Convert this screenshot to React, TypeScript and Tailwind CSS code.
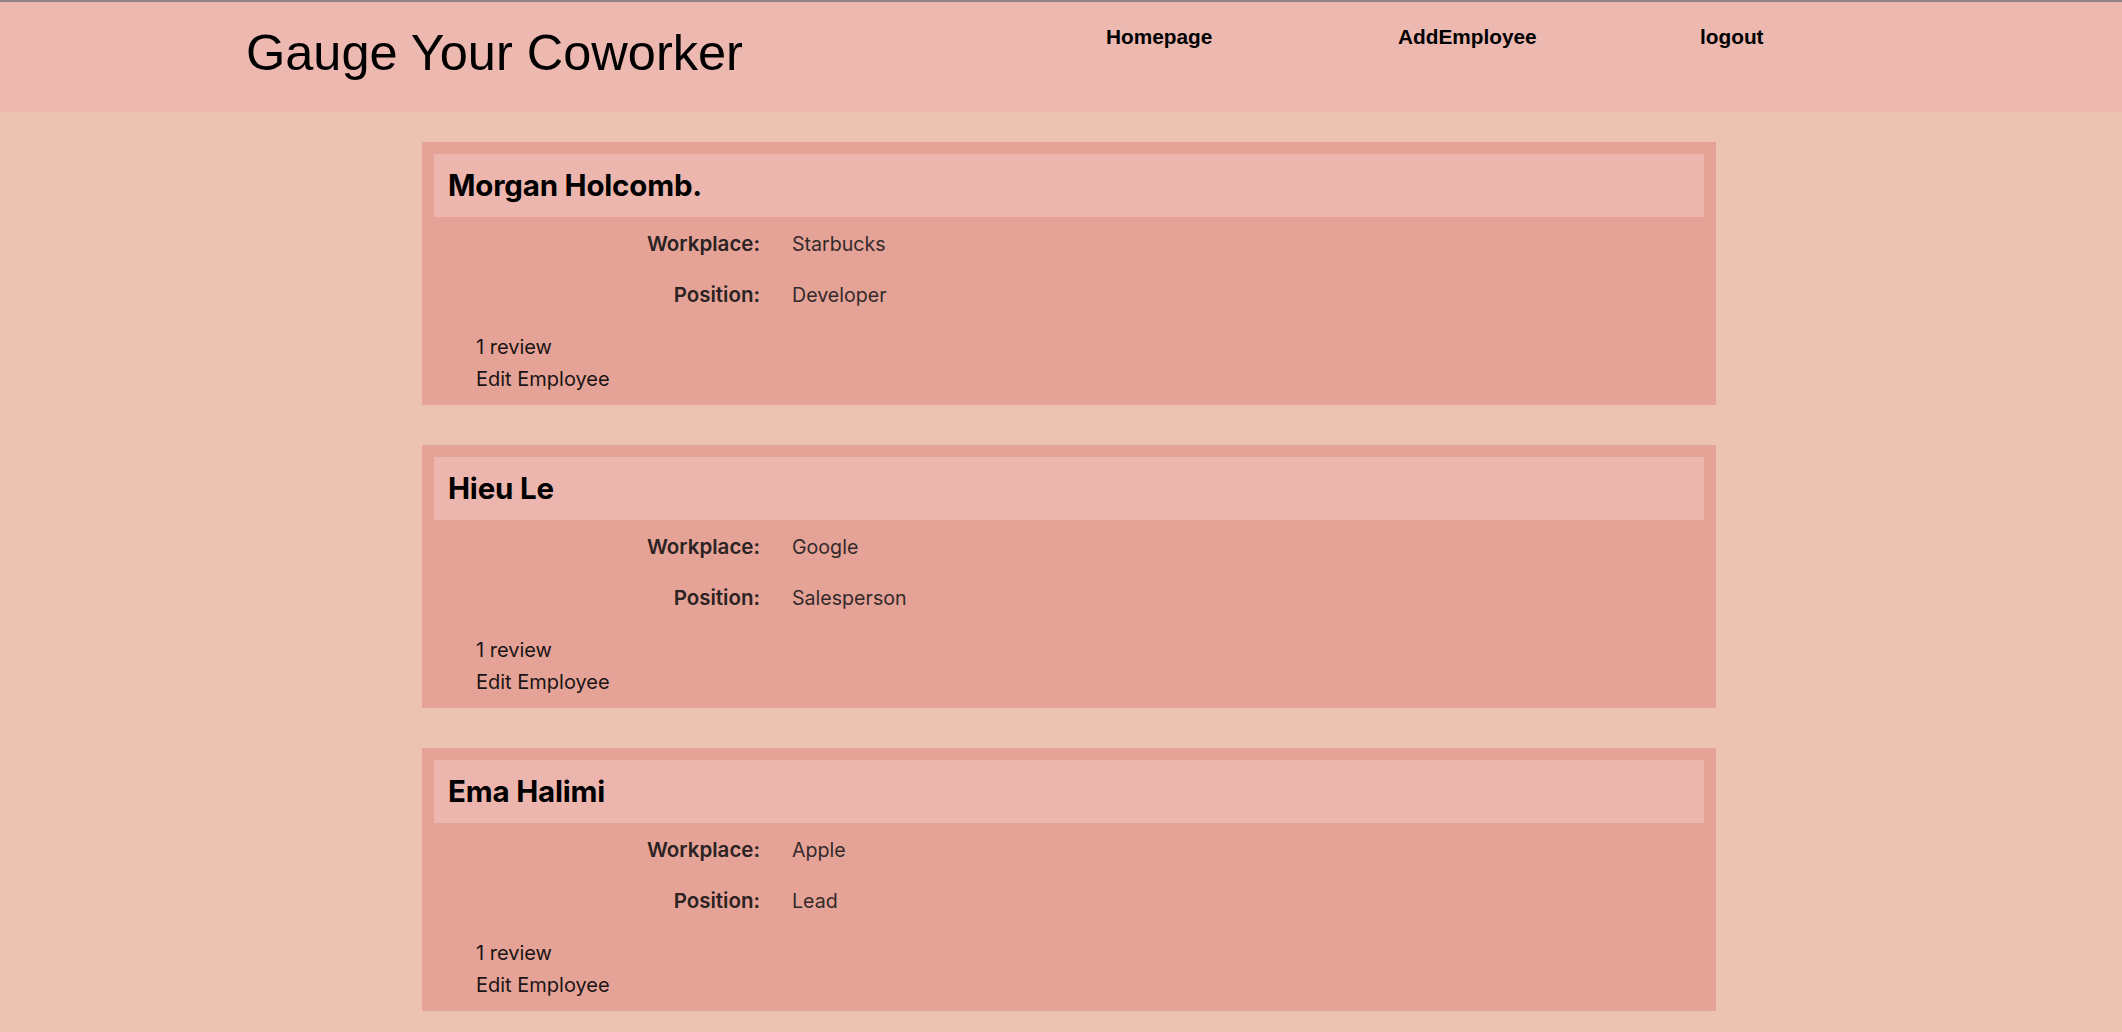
import React from "react";

const employees = [
  { name: "Morgan Holcomb.", workplace: "Starbucks", position: "Developer" },
  { name: "Hieu Le", workplace: "Google", position: "Salesperson" },
  { name: "Ema Halimi", workplace: "Apple", position: "Lead" },
];

function Card({ e }: { e: (typeof employees)[number] }) {
  return (
    <div className="bg-[#e5a398] p-[12px] pb-[10px]">
      <div className="bg-[#ecb6ae] h-[63px] flex items-center px-[14px]">
        <h2 className="text-[29.5px] font-bold text-black [font-family:Inter,sans-serif] tracking-[-0.2px]">{e.name}</h2>
      </div>
      <div className="[font-family:Inter,sans-serif]">
        <div className="flex items-center h-[51px] mt-[2px]">
          <div className="w-[326px] text-right font-semibold text-[20.5px] text-[#2b2222]">Workplace:</div>
          <div className="ml-[32px] text-[19.6px] text-[#332a2a]">{e.workplace}</div>
        </div>
        <div className="flex items-center h-[51px]">
          <div className="w-[326px] text-right font-semibold text-[20.5px] text-[#2b2222]">Position:</div>
          <div className="ml-[32px] text-[19.6px] text-[#332a2a]">{e.position}</div>
        </div>
        <div className="pl-[42px] pt-[10px] text-[20px] text-[#1a1414] leading-[32px]">
          <div>1 review</div>
          <div>Edit Employee</div>
        </div>
      </div>
    </div>
  );
}

export default function App() {
  return (
    <div className="min-h-[1032px] bg-[#ebc3b0] [font-family:'Liberation_Sans',Arial,sans-serif]">
      <header className="h-[112px] bg-[#ecb8b0] border-t-2 border-[#8e8686] flex items-start">
        <div className="ml-[246px] w-[860px] mt-[21px]">
          <h1 className="text-[50.5px] leading-[60px] text-black [font-family:'Liberation_Sans',Arial,sans-serif]">Gauge Your Coworker</h1>
        </div>
        <nav className="flex mt-[19px] text-[20.8px] font-bold text-black">
          <a className="w-[292px]">Homepage</a>
          <a className="w-[302px]">AddEmployee</a>
          <a>logout</a>
        </nav>
      </header>
      <main className="w-[1294px] ml-[422px] pt-[30px] flex flex-col gap-[40px] pb-[20px]">
        {employees.map((e) => (
          <Card key={e.name} e={e} />
        ))}
      </main>
    </div>
  );
}
